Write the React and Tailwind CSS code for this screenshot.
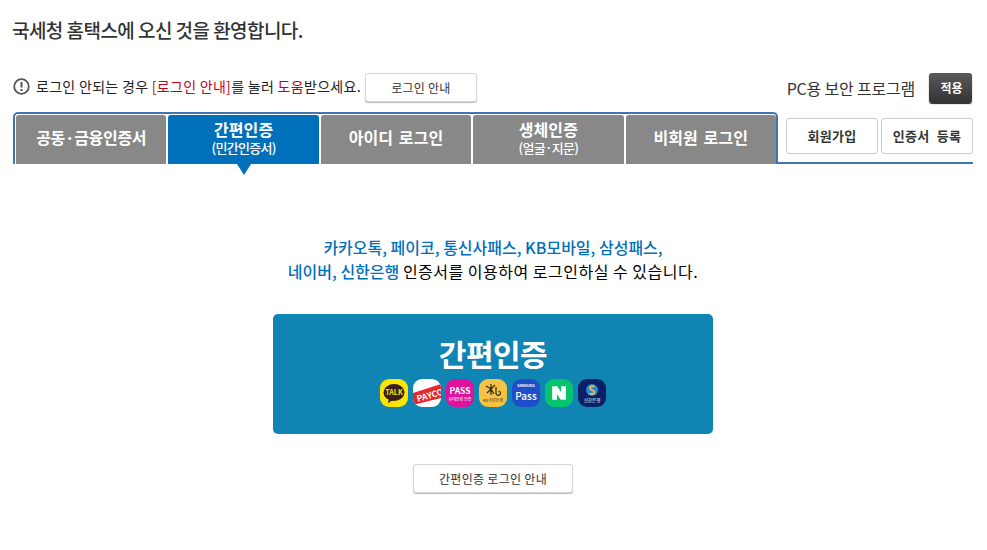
const fontStack = { fontFamily: '"Noto Sans CJK KR", "Noto Sans", sans-serif' };

const tabs = [
  { label: '공동·금융인증서', tight: true },
  { label: '간편인증', sub: '(민간인증서)', active: true },
  { label: '아이디 로그인' },
  { label: '생체인증', sub: '(얼굴·지문)' },
  { label: '비회원 로그인' },
];

function Tab({ label, sub, active, tight }) {
  return (
    <div
      className={`relative flex h-[49px] w-[150.4px] flex-col items-center justify-center rounded-t-[3px] pb-[5px] text-white ${
        active ? 'bg-[#0170bb]' : 'bg-[#888888]'
      }`}
    >
      <span className={`text-[16px] leading-[20px] font-bold [word-spacing:2px] ${tight ? 'tracking-[-0.3px]' : 'tracking-[0.1px]'}`}>{label}</span>
      {sub && <span className="text-[13px] leading-[17px] font-medium tracking-[-0.7px]">{sub}</span>}
      {active && (
        <span className="absolute top-full left-1/2 h-0 w-0 -translate-x-1/2 border-x-[7px] border-t-[11px] border-x-transparent border-t-[#0170bb]" />
      )}
    </div>
  );
}

function ServiceIcons() {
  return (
    <div className="mt-[6px] flex gap-[5px]">
      {/* 카카오톡 */}
      <div className="flex h-7 w-7 items-center justify-center overflow-hidden rounded-[9px] bg-[#fde500]">
        <svg width="24" height="24" viewBox="0 0 24 24">
          <ellipse cx="12" cy="11.5" rx="10.5" ry="8.5" fill="#3a1d1d" />
          <path d="M7 17l-1 5 5-3z" fill="#3a1d1d" />
          <text x="12" y="14" textAnchor="middle" fontSize="7" fontWeight="700" fill="#fde500">TALK</text>
        </svg>
      </div>
      {/* 페이코 */}
      <div className="flex h-7 w-7 items-center justify-center overflow-hidden rounded-[9px] bg-white">
        <svg width="28" height="28" viewBox="0 0 28 28">
          <path d="M0 14L28 5V19L0 26z" fill="#e8262d" />
          <text x="3" y="20" fontSize="8.5" fontWeight="700" fill="#fff" transform="rotate(-16 14 15)">PAYCO</text>
        </svg>
      </div>
      {/* 통신사패스 */}
      <div className="flex h-7 w-7 flex-col items-center justify-center rounded-[9px] bg-[#e0119d] text-white">
        <span className="text-[8.5px] leading-[12px] font-bold">PASS</span>
        <span className="text-[4px] leading-[6px]">휴대전화 인증</span>
      </div>
      {/* KB모바일 */}
      <div className="flex h-7 w-7 flex-col items-center justify-center rounded-[9px] bg-[#f6c244] text-[#3a3126]">
        <svg width="16" height="14" viewBox="0 0 16 14" fill="none" stroke="#2c261f" strokeWidth="1.2">
          <path d="M6 1v11M1 3l5 3 4-4M2 10l4-4 3 5" />
          <path d="M11 4v6a2.2 2.2 0 1 0 2.5-2" />
        </svg>
        <span className="text-[4px] leading-[6px]">KB국민은행</span>
      </div>
      {/* 삼성패스 */}
      <div className="flex h-7 w-7 flex-col items-center justify-center rounded-[9px] bg-[#1f4fc8] text-white">
        <span className="text-[3.5px] leading-[6px] font-bold">SAMSUNG</span>
        <span className="text-[10px] leading-[14px] font-medium">Pass</span>
      </div>
      {/* 네이버 */}
      <div className="flex h-7 w-7 items-center justify-center rounded-[9px] bg-[#05c46b]">
        <svg width="16" height="16" viewBox="0 0 14 14">
          <path d="M1 1h4.4l3.4 5.2V1H13v12H8.6L5.2 7.8V13H1z" fill="#fff" />
        </svg>
      </div>
      {/* 신한은행 */}
      <div className="flex h-7 w-7 flex-col items-center justify-center rounded-[9px] bg-[#0b1f66] text-white">
        <svg width="12" height="14" viewBox="0 0 12 14">
          <circle cx="6" cy="7" r="6" fill="#2c86d9" />
          <path d="M8.5 3.5C6 2.5 3.5 3.5 4 5.5s4.5 1.5 4.5 3.5S6 11.5 3.5 10.5" fill="none" stroke="#f3c230" strokeWidth="1.8" />
        </svg>
        <span className="text-[4.5px] leading-[7px]">신한은행</span>
      </div>
    </div>
  );
}

export default function App() {
  return (
    <div className="h-[550px] w-[987px] overflow-hidden bg-white text-[#222222]" style={fontStack}>
      <div className="pt-[16px] pl-[12px]">
        <h1 className="text-[19px] leading-[28px] font-medium tracking-[-0.55px] text-[#333333]">국세청 홈택스에 오신 것을 환영합니다.</h1>
      </div>

      <div className="mt-[29px] flex h-[30px] items-center pr-[15px] pl-[13px]">
        <svg width="17" height="17" viewBox="0 0 17 17" className="mr-[6px] mb-[4px] shrink-0" fill="none">
          <circle cx="8.5" cy="8.5" r="7.3" stroke="#555555" strokeWidth="1.8" />
          <path d="M8.5 4v5.5M8.5 11v2" stroke="#555555" strokeWidth="2" />
        </svg>
        <p className="mb-[3px] text-[14px] tracking-[0.3px] whitespace-nowrap text-[#222222]">
          로그인 안되는 경우 <span className="text-[#c8001e]">[로그인 안내]</span>를 눌러 <span className="text-[#c8001e]">도움</span>받으세요.
        </p>
        <button className="ml-[4px] h-[29px] w-[112px] self-start rounded-[3px] border border-[#d5d5d5] bg-white text-[12px] tracking-[0.2px] text-[#333333] shadow-[0_1px_1px_#bbbbbb]">
          로그인 안내
        </button>
        <span className="mr-[14px] ml-auto text-[16px] tracking-[-0.2px] text-[#333333]">PC용 보안 프로그램</span>
        <button className="h-[30px] w-[43px] rounded-[3px] bg-gradient-to-b from-[#5a5a5a] to-[#333333] pl-[2px] text-[12px] font-bold text-white shadow-[0_1px_1px_#222222]">
          적용
        </button>
      </div>

      <div className="mt-[9px] flex items-end pl-[13px]">
        <div className="flex h-[52px] w-[765px] rounded-t-[5px] border-x-2 border-t-2 border-[#3f74b3] pt-px pl-px">
          <div className="flex gap-[2px]">
            {tabs.map((tab) => (
              <Tab key={tab.label} {...tab} />
            ))}
          </div>
        </div>
        <div className="flex h-[52px] w-[195px] items-start justify-end gap-[3px] border-b-2 border-[#3f74b3] pt-[6px]">
          <button className="h-[36px] w-[92px] rounded-[3px] border border-[#cccccc] bg-white text-[13px] font-bold tracking-[0.3px] text-[#333333]">회원가입</button>
          <button className="h-[36px] w-[92px] rounded-[3px] border border-[#cccccc] bg-white text-[13px] font-bold tracking-[0.3px] text-[#333333] [word-spacing:4px]">인증서 등록</button>
        </div>
      </div>

      <div className="flex flex-col items-center pt-[71px] pr-px">
        <p className="text-center text-[16px] leading-[24px] text-black">
          <span className="font-medium text-[#0170bb]">카카오톡, 페이코, 통신사패스, KB모바일, 삼성패스,</span>
          <br />
          <span className="font-medium text-[#0170bb]">네이버, 신한은행</span> <span className="tracking-[0.5px]">인증서를 이용하여 로그인하실 수 있습니다.</span>
        </p>
        <div className="mt-[31px] flex h-[120px] w-[440px] flex-col items-center rounded-[5px] bg-[#1084b3] pt-[19px] text-white">
          <span className="text-[30px] leading-[40px] font-bold tracking-[-0.5px]">간편인증</span>
          <ServiceIcons />
        </div>
        <button className="mt-[30px] h-[29px] w-[160px] rounded-[3px] border border-[#d5d5d5] bg-white text-[12px] tracking-[0.3px] text-[#333333] shadow-[0_1px_1px_#bbbbbb]">
          간편인증 로그인 안내
        </button>
      </div>
    </div>
  );
}
